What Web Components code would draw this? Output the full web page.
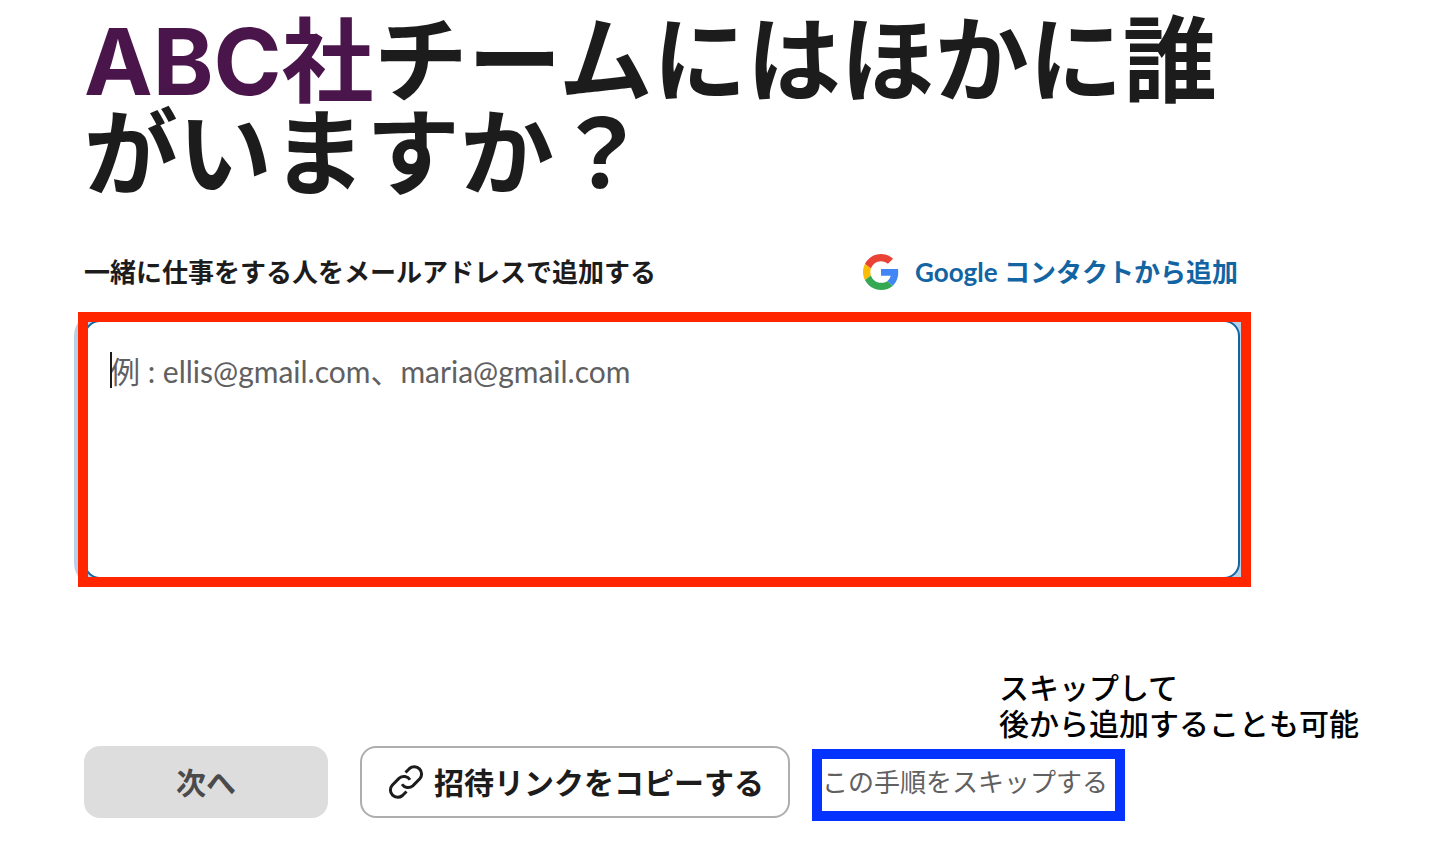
<!DOCTYPE html>
<html lang="ja">
<head>
<meta charset="utf-8">
<meta name="viewport" content="width=device-width, initial-scale=1">
<title>チームメンバーを追加</title>
<style>
  html { background: #fff; }
  body {
    margin: 0;
    color: #1d1c1d;
    font-family: Lato, "Noto Sans CJK JP", sans-serif;
  }
</style>
</head>
<body>
<invite-page>
  <team-heading slot="heading"><span slot="team">ABC社</span>チームにはほかに誰がいますか？</team-heading>
  <email-field slot="field"></email-field>
  <action-bar slot="actions"></action-bar>
</invite-page>

<script>
  const define = (name, html) => {
    const template = document.createElement("template");
    template.innerHTML = html;
    customElements.define(name, class extends HTMLElement {
      constructor() {
        super();
        this.attachShadow({ mode: "open" }).append(template.content.cloneNode(true));
      }
    });
  };

  define("invite-page", `
    <style>
      :host { display: block; }
      main {
        display: flex;
        flex-direction: column;
        padding: 15px 196px 30px 84px;
      }
      .field { margin-top: 52px; }
      .actions { margin-top: 167px; }
    </style>
    <main>
      <slot name="heading"></slot>
      <div class="field"><slot name="field"></slot></div>
      <div class="actions"><slot name="actions"></slot></div>
    </main>
  `);

  define("team-heading", `
    <style>
      :host { display: block; }
      h1 {
        margin: 0;
        font: 700 94px/92px Inter, "Noto Sans CJK JP", sans-serif;
      }
      .team { color: #4a154b; font-size: 92px; }
    </style>
    <h1><span class="team"><slot name="team"></slot></span><slot></slot></h1>
  `);

  define("google-logo", `
    <style>
      :host { display: block; width: 36px; height: 36px; }
      svg { display: block; width: 100%; height: 100%; }
    </style>
    <svg viewBox="0 0 48 48" aria-hidden="true">
      <path fill="#ea4335" d="M24 9.500c3.540 0 6.710 1.220 9.210 3.600l6.850-6.850C35.900 2.380 30.470 0 24 0 14.620 0 6.510 5.380 2.560 13.220l7.980 6.190C12.430 13.720 17.740 9.500 24 9.500z"/>
      <path fill="#4285f4" d="M46.980 24.550c0-1.570-.15-3.090-.38-4.550H24v9.020h12.940c-.58 2.960-2.260 5.480-4.780 7.180l7.730 6c4.510-4.180 7.090-10.360 7.090-17.650z"/>
      <path fill="#fbbc05" d="M10.530 28.590c-.48-1.450-.76-2.990-.76-4.590s.27-3.140.76-4.590l-7.980-6.190C.92 16.460 0 20.120 0 24c0 3.880.92 7.540 2.560 10.780l7.970-6.190z"/>
      <path fill="#34a853" d="M24 48c6.480 0 11.930-2.130 15.890-5.810l-7.730-6c-2.150 1.450-4.920 2.300-8.160 2.300-6.260 0-11.570-4.220-13.470-9.910l-7.980 6.190C6.510 42.620 14.620 48 24 48z"/>
    </svg>
  `);

  define("highlight-frame", `
    <style>
      :host {
        display: block;
        position: absolute;
        box-sizing: border-box;
        border: 10px solid var(--frame-color);
        pointer-events: none;
      }
    </style>
  `);

  define("email-field", `
    <style>
      :host { display: block; }
      .top {
        display: flex;
        justify-content: space-between;
        align-items: center;
        padding-right: 2px;
        font-size: 26px;
        line-height: 40px;
        font-weight: 700;
      }
      a {
        display: flex;
        align-items: center;
        gap: 16px;
        color: #1264a3;
        text-decoration: none;
      }
      .box { position: relative; margin-top: 28px; }
      textarea {
        display: block;
        box-sizing: border-box;
        width: 100%;
        height: 259px;
        padding: 27px 24px;
        border: 2px solid #1264a3;
        border-radius: 16px;
        box-shadow: -2px 0 0 8px #b8d0e8;
        outline: 0;
        resize: none;
        background: #fff;
        color: #1d1c1d;
        font: 400 30px/44px Lato, "Noto Sans CJK JP", sans-serif;
      }
      textarea::placeholder { color: #616061; opacity: 1; }
      .caret {
        position: absolute;
        left: 26px;
        top: 32px;
        width: 2px;
        height: 36px;
        background: #1d1c1d;
      }
      highlight-frame {
        --frame-color: #ff2600;
        inset: -8px -11px -8px -6px;
      }
    </style>
    <div class="top">
      <label for="emails">一緒に仕事をする人をメールアドレスで追加する</label>
      <a href="#google"><google-logo></google-logo><span>Google コンタクトから追加</span></a>
    </div>
    <div class="box">
      <textarea id="emails" placeholder="例 : ellis@gmail.com、maria@gmail.com"></textarea>
      <span class="caret"></span>
      <highlight-frame></highlight-frame>
    </div>
  `);

  define("link-icon", `
    <style>
      :host { display: block; width: 36px; height: 36px; }
      svg { display: block; width: 100%; height: 100%; }
    </style>
    <svg viewBox="0 0 36 36" fill="none" stroke="currentColor" stroke-width="3" aria-hidden="true">
      <path d="M17.500 8.500 21.500 4.500a7.300 7.300 0 0 1 10.300 10.300l-7 7a7.300 7.300 0 0 1-10.800-1.600"/>
      <path d="M18.500 27.500 14.500 31.500a7.300 7.300 0 0 1-10.300-10.300l7-7a7.300 7.300 0 0 1 10.800 1.600"/>
    </svg>
  `);

  define("action-bar", `
    <style>
      :host { display: block; }
      .row { display: flex; align-items: center; gap: 32px; }
      button {
        display: flex;
        align-items: center;
        justify-content: center;
        gap: 10px;
        box-sizing: border-box;
        height: 72px;
        margin: 0;
        padding: 0 24px 0 26px;
        border: 2px solid #aeaeae;
        border-radius: 16px;
        background: #fff;
        color: #1d1c1d;
        font: 700 30px/44px Lato, "Noto Sans CJK JP", sans-serif;
        white-space: nowrap;
      }
      .next {
        width: 244px;
        padding: 0;
        border-color: #ddd;
        background: #ddd;
        color: #4a4a4b;
      }
      .skip { position: relative; }
      a {
        color: #616061;
        font-size: 26px;
        line-height: 40px;
        text-decoration: none;
        white-space: nowrap;
      }
      highlight-frame {
        --frame-color: #0433ff;
        inset: -13px -17px -19px -10px;
      }
      .note {
        position: absolute;
        left: 177px;
        bottom: 61px;
        margin: 0;
        color: #000;
        font-size: 30px;
        line-height: 36px;
        font-weight: 500;
        white-space: nowrap;
      }
    </style>
    <div class="row">
      <button class="next" type="button" disabled>次へ</button>
      <button type="button"><link-icon></link-icon>招待リンクをコピーする</button>
      <div class="skip">
        <a href="#skip">この手順をスキップする</a>
        <highlight-frame></highlight-frame>
        <p class="note">スキップして<br>後から追加することも可能</p>
      </div>
    </div>
  `);
</script>
</body>
</html>
